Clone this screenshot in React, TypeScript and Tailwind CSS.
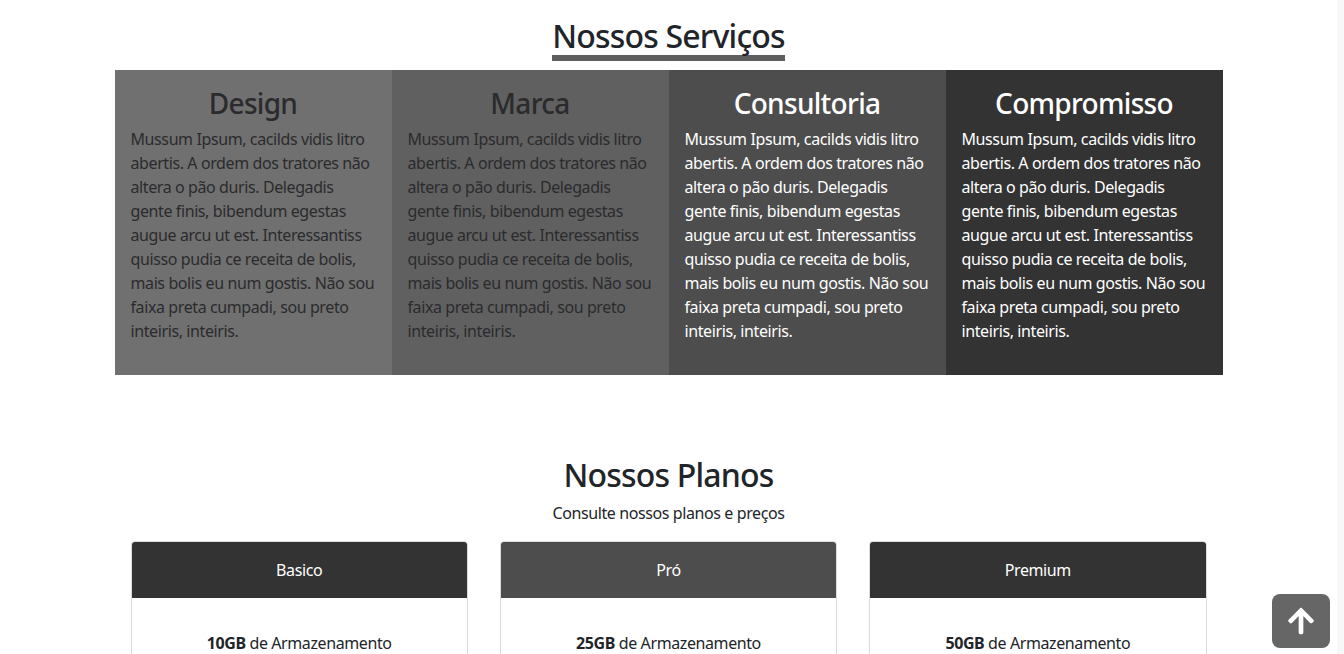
import { FaArrowUp } from "react-icons/fa";

const lorem =
  "Mussum Ipsum, cacilds vidis litro abertis. A ordem dos tratores não altera o pão duris. Delegadis gente finis, bibendum egestas augue arcu ut est. Interessantiss quisso pudia ce receita de bolis, mais bolis eu num gostis. Não sou faixa preta cumpadi, sou preto inteiris, inteiris.";

const services = [
  { title: "Design", bg: "bg-[#707070]", fg: "text-[#2b2b2d]" },
  { title: "Marca", bg: "bg-[#606060]", fg: "text-[#2b2b2d]" },
  { title: "Consultoria", bg: "bg-[#4d4d4d]", fg: "text-white" },
  { title: "Compromisso", bg: "bg-[#333333]", fg: "text-white" },
];

const plans = [
  { name: "Basico", size: "10GB", bg: "bg-[#333333]" },
  { name: "Pró", size: "25GB", bg: "bg-[#4d4d4d]" },
  { name: "Premium", size: "50GB", bg: "bg-[#333333]" },
];

export default function App() {
  return (
    <div className="flex h-[654px] overflow-hidden bg-white font-['Segoe_UI','Noto_Sans',sans-serif] text-[#212529] tracking-[-0.4px]">
      <main className="flex-1">
        <section className="pt-[17px] text-center">
          <h2 className="inline-block border-b-[6px] border-[#5e5e5e] text-[32px] font-medium leading-[38px] tracking-[-0.8px]">
            Nossos Serviços
          </h2>
          <div className="mx-auto mt-[9px] grid w-[1108px] grid-cols-4">
            {services.map((s) => (
              <div key={s.title} className={`${s.bg} ${s.fg} p-4 text-left`}>
                <h3 className="mb-[7px] text-center text-[28px] font-medium leading-[34px] tracking-[-0.7px]">
                  {s.title}
                </h3>
                <p className="mb-4 text-base leading-6">{lorem}</p>
              </div>
            ))}
          </div>
        </section>

        <section className="mt-[81px] text-center">
          <h2 className="text-[32px] font-medium leading-[38px] tracking-[-0.8px]">Nossos Planos</h2>
          <p className="mt-[7px] text-base leading-6">Consulte nossos planos e preços</p>
          <div className="mx-auto mt-[16px] grid w-[1076px] grid-cols-3 gap-8">
            {plans.map((p) => (
              <div
                key={p.name}
                className="overflow-hidden rounded-[4px] border border-[#dcdcdc] bg-white"
              >
                <div className={`${p.bg} py-4 text-base leading-6 text-white`}>{p.name}</div>
                <div className="pt-[33px] pb-6 text-base leading-6">
                  <b className="font-bold">{p.size}</b> de Armazenamento
                </div>
              </div>
            ))}
          </div>
        </section>
      </main>
      <div className="w-[7px] bg-[#f8f8f8]" />

      <button className="fixed right-[14px] bottom-[6px] flex h-[54px] w-[58px] items-center justify-center rounded-lg bg-[#666666] text-white">
        <FaArrowUp className="h-[30px] w-[30px]" />
      </button>
    </div>
  );
}
